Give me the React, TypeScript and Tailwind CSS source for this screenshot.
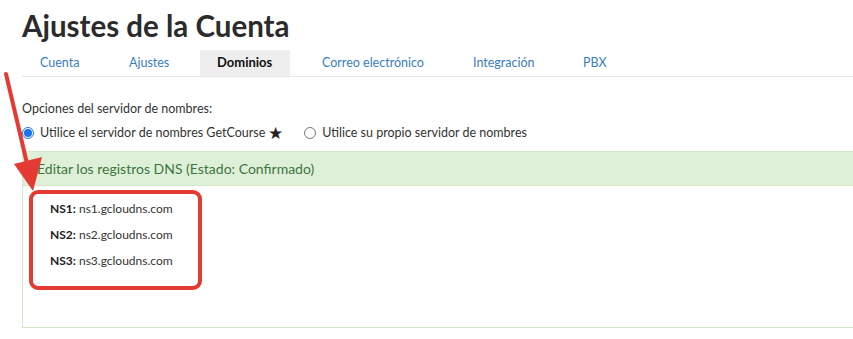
const tabs = [
  { name: "Cuenta", cls: "w-[75px] mr-[14px]" },
  { name: "Ajustes", cls: "w-[75px] mr-[14px]" },
  { name: "Dominios", cls: "w-[90px] mr-[14px]" },
  { name: "Correo electrónico", cls: "w-[137px] mr-[14px]" },
  { name: "Integración", cls: "w-[96px] mr-[14px]" },
  { name: "PBX", cls: "w-[60px]" },
];

const servers = [
  { label: "NS1:", host: "ns1.gcloudns.com" },
  { label: "NS2:", host: "ns2.gcloudns.com" },
  { label: "NS3:", host: "ns3.gcloudns.com" },
];

export default function App() {
  return (
    <div className="relative h-[339px] w-[853px] overflow-hidden bg-white pl-[22px] pt-[8px] font-['Lato',sans-serif] text-[#333]">
      <h1 className="text-[29.5px] leading-[36px] font-bold text-[#2b2b2b]">Ajustes de la Cuenta</h1>

      <div className="mt-[6px] flex border-b border-[#e8e8e8]">
        {tabs.map((t) => (
          <div
            key={t.name}
            className={
              t.name === "Dominios"
                ? `${t.cls} bg-[#eeeeee] pl-[17px] pt-[3px] pb-[4px] text-[13px] leading-[19px] font-bold text-[#111]`
                : `${t.cls} pl-[18px] pt-[3px] pb-[4px] text-[12.5px] leading-[19px] text-[#3a7cc0]`
            }
          >
            {t.name}
          </div>
        ))}
      </div>

      <div className="mt-[23px] text-[12.5px] leading-[18px]">Opciones del servidor de nombres:</div>

      <div className="mt-[6px] flex items-center text-[12.5px] leading-[18px]">
        <label className="flex items-center">
          <span className="mr-[6px] flex h-[12px] w-[12px] items-center justify-center rounded-full border border-[#1a73e8]">
            <span className="h-[8px] w-[8px] rounded-full bg-[#1a73e8]" />
          </span>
          Utilice el servidor de nombres GetCourse
          <span className="ml-[3px] text-[17px] leading-[18px] text-[#222]">★</span>
        </label>
        <label className="ml-[21px] flex items-center">
          <span className="mr-[6px] h-[12px] w-[12px] rounded-full border border-[#777]" />
          Utilice su propio servidor de nombres
        </label>
      </div>

      <div className="mt-[9px] -mr-[2px] h-[177px] border border-r-0 border-[#d6e9c6]">
        <div className="border-b border-[#d6e9c6] bg-[#dff0d8] px-[14px] py-[7px] text-[14px] leading-[19px] text-[#3c763d]">
          Editar los registros DNS (Estado: Confirmado)
        </div>
        <div className="ml-[6px] mt-[4px] w-[173px] rounded-[9px] border-[4px] border-[#e53a33] pl-[17px] pt-[2px] pb-[12px]">
          {servers.map((s) => (
            <div key={s.label} className="text-[12px] leading-[26px]">
              <span className="font-bold text-[#222]">{s.label}</span> {s.host}
            </div>
          ))}
        </div>
      </div>

      {/* red pointer arrow over the page */}
      <svg className="absolute left-0 top-0" width="60" height="200" viewBox="0 0 60 200">
        <line x1="6" y1="74" x2="29" y2="172" stroke="#e53a33" strokeWidth="4" strokeLinecap="round" />
        <polygon points="14,164 42,157 33,191" fill="#e53a33" />
      </svg>
    </div>
  );
}
